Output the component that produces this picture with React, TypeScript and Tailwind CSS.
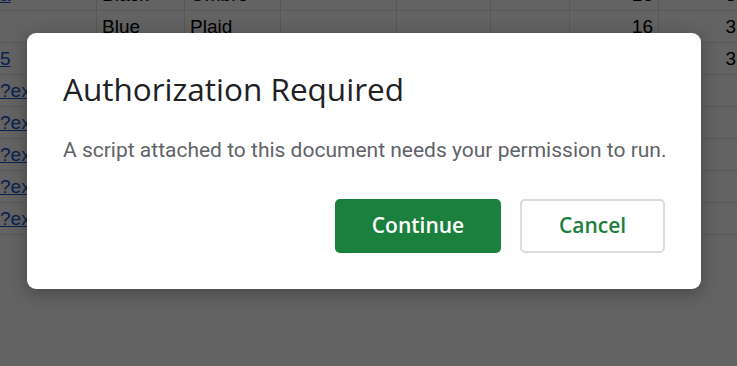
import React from 'react'

const cols = ['w-[97px]', 'w-[88px]', 'w-[96px]', 'w-[116px]', 'w-[94px]', 'w-[79px]', 'w-[89px]', 'w-[120px]']

type Cell = { text?: string; link?: boolean; right?: boolean }

const rows: Cell[][] = [
  [{ text: 'a', link: true }, { text: 'Black' }, { text: 'Ombre' }, {}, {}, {}, { text: '16', right: true }, { text: '32.00', right: true }],
  [{}, { text: 'Blue' }, { text: 'Plaid' }, {}, {}, {}, { text: '16', right: true }, { text: '32.00', right: true }],
  [{ text: '5', link: true }, {}, {}, {}, {}, {}, {}, { text: '32.00', right: true }],
  [{ text: '?export=download', link: true }, {}, {}, {}, {}, {}, {}, {}],
  [{ text: '?export=download', link: true }, {}, {}, {}, {}, {}, {}, {}],
  [{ text: '?export=download', link: true }, {}, {}, {}, {}, {}, {}, {}],
  [{ text: '?export=download', link: true }, {}, {}, {}, {}, {}, {}, {}],
  [{ text: '?export=download', link: true }, {}, {}, {}, {}, {}, {}, {}],
]

function Sheet() {
  return (
    <div className="-mt-[21px] flex flex-col font-['Liberation_Sans',Arial,sans-serif] text-[19px] leading-[22px] text-black">
      {rows.map((row, i) => (
        <div key={i} className="flex h-[32px] shrink-0 border-b border-[#e2e3e3]">
          {row.map((c, j) => (
            <div
              key={j}
              className={`${cols[j]} shrink-0 flex items-end pb-[4px] overflow-hidden whitespace-nowrap border-r border-[#e2e3e3] ${
                c.right ? 'justify-end pr-[5px]' : j === 0 ? 'pl-0' : 'pl-[5px]'
              }`}
            >
              {c.link ? (
                <span className="text-[#1155cc] underline">{c.text}</span>
              ) : (
                <span>{c.text}</span>
              )}
            </div>
          ))}
        </div>
      ))}
    </div>
  )
}

export default function App() {
  return (
    <div className="relative h-[366px] w-[737px] overflow-hidden bg-white">
      <Sheet />

      {/* modal backdrop */}
      <div className="absolute inset-0 bg-[rgba(0,0,0,0.61)]">
        <div className="absolute left-[27px] top-[33px] w-[674px] rounded-[9px] bg-white px-[36px] pt-[36px] pb-[36px] shadow-[0_4px_18px_rgba(0,0,0,0.3)]">
          <h1 className="font-['Open_Sans',sans-serif] text-[31.5px] leading-[40px] font-normal text-[#202124]">
            Authorization Required
          </h1>
          <p className="mt-[29px] whitespace-nowrap font-['Roboto',sans-serif] text-[21px] leading-[24px] text-[#5f6368]">
            A script attached to this document needs your permission to run.
          </p>
          <div className="mt-[37px] flex justify-end gap-[19px] font-['Open_Sans',sans-serif] text-[21px] font-semibold">
            <button className="h-[54px] w-[166px] rounded-[5px] bg-[#1b803e] text-white">Continue</button>
            <button className="h-[54px] w-[145px] rounded-[5px] border-2 border-[#dadce0] bg-white text-[#1b803e]">
              Cancel
            </button>
          </div>
        </div>
      </div>
    </div>
  )
}
